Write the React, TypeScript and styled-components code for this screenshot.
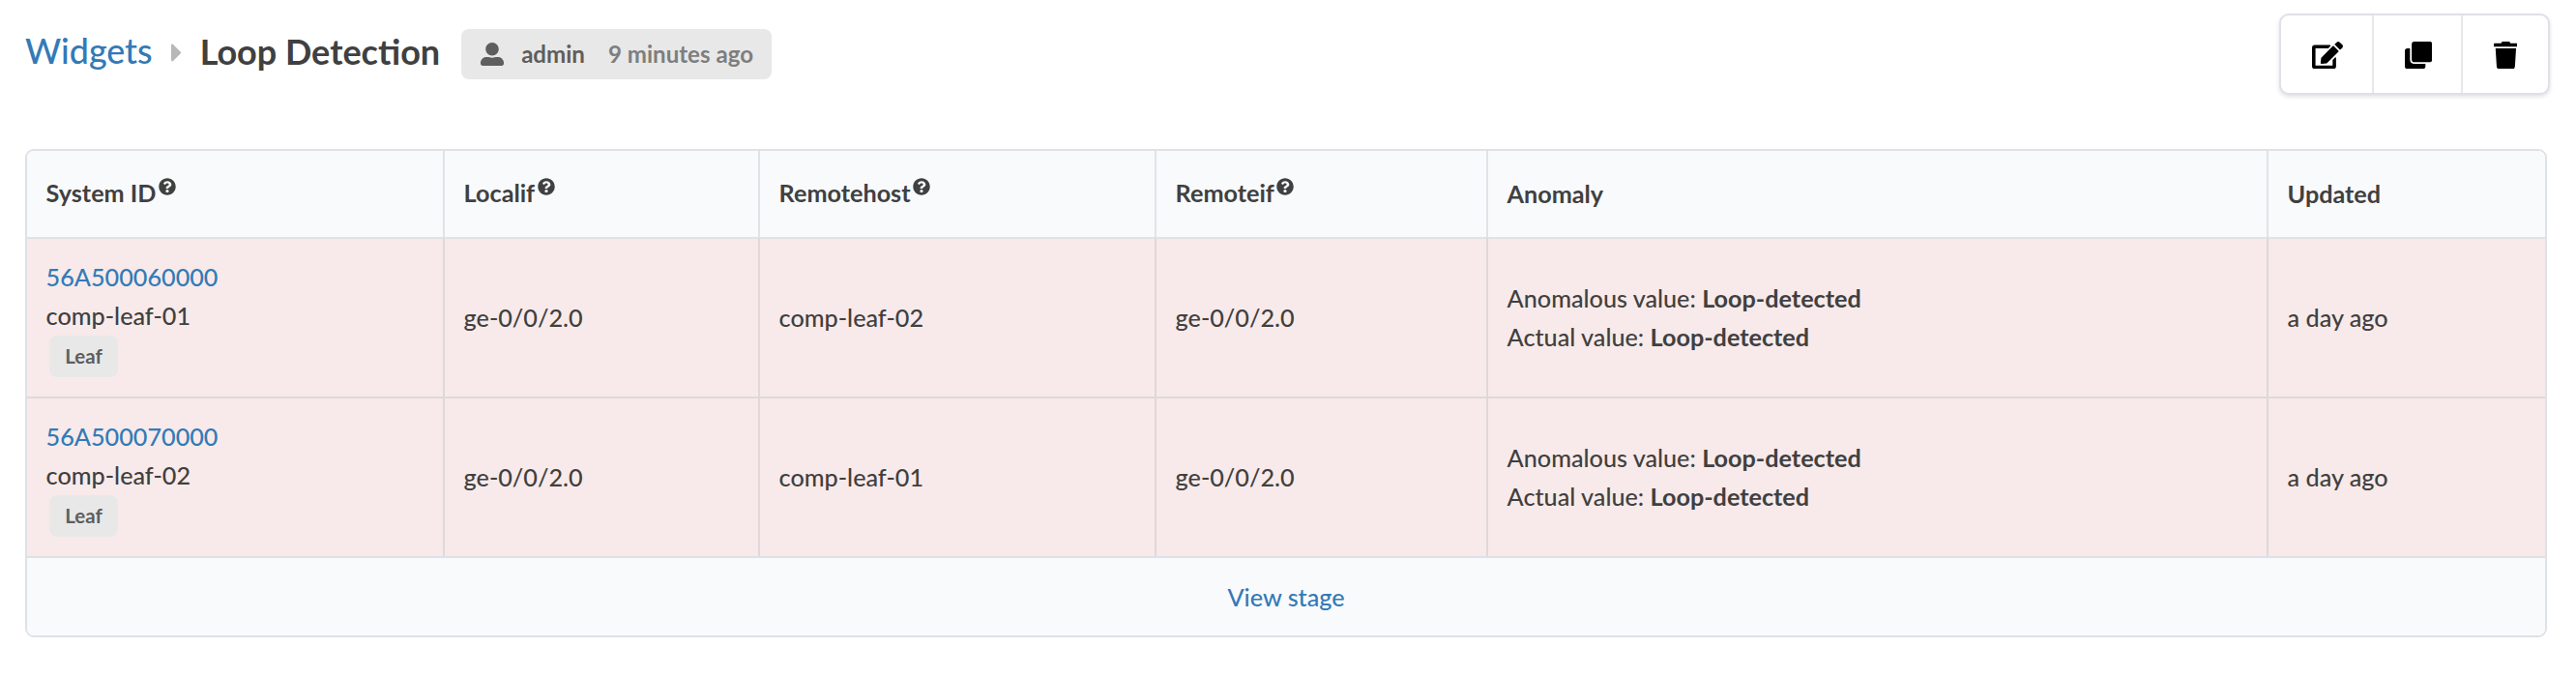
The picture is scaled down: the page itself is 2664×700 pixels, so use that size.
import React from 'react';
import styled, { createGlobalStyle } from 'styled-components';
import { FaCaretRight, FaClone, FaEdit, FaQuestionCircle, FaTrash, FaUserAlt } from 'react-icons/fa';

const GlobalStyle = createGlobalStyle`
  *, *::before, *::after { box-sizing: border-box; }
  body {
    margin: 0;
    background: #fff;
    color: #404040;
    font-family: Lato, sans-serif;
    font-size: 25.2px;
    font-weight: 500;
    line-height: 40px;
  }
`;

const Page = styled.main`
  padding: 14px 27px 0 26px;
`;

const Header = styled.header`
  display: flex;
  align-items: flex-start;
  height: 140px;
`;

const Breadcrumb = styled.nav`
  display: flex;
  align-items: center;
  height: 77px;
  font-size: 35.8px;
`;

const Link = styled.a`
  color: #337ab7;
  text-decoration: none;
`;

const Divider = styled(FaCaretRight)`
  width: 10px;
  height: 19px;
  margin: 3px 20px 0 19px;
  color: #b8b8b8;
`;

const Title = styled.h1`
  margin: 0;
  font-size: 36px;
  font-weight: 700;
`;

const AuthorLabel = styled.div`
  display: flex;
  align-items: center;
  height: 52px;
  margin: 16px 0 0 22px;
  padding: 0 19px 0 20px;
  border-radius: 8px;
  background: #e8e8e8;
  color: #5e5e5e;
  font-size: 24.1px;
  font-weight: 700;

  svg {
    width: 24px;
    height: 24px;
    margin-right: 18px;
  }
`;

const Elapsed = styled.span`
  margin-left: 24px;
  color: #7e7e7e;
`;

const ButtonGroup = styled.div`
  display: flex;
  height: 84px;
  margin-left: auto;
  border: 2px solid #dfe1e8;
  border-radius: 10px;
  background: #fff;
  box-shadow: 0 2px 4px rgba(34, 36, 60, 0.14);
`;

const IconButton = styled.button<{ $width: number; $icon: number }>`
  display: flex;
  align-items: center;
  justify-content: center;
  width: ${({ $width }) => $width}px;
  padding: 6px 0 4px 2px;
  border: 0;
  background: none;
  color: #000;

  & + & {
    border-left: 2px solid #e8e8e8;
  }

  &:last-child {
    padding-left: 0;
  }

  svg {
    flex: none;
    width: ${({ $icon }) => $icon}px;
    height: 28.4px;
  }
`;

const TableFrame = styled.section`
  width: 2608px;
  overflow: hidden;
  border: 2px solid #dee1e6;
  border-radius: 9px;
`;

const Table = styled.table`
  width: 100%;
  table-layout: fixed;
  border-collapse: separate;
  border-spacing: 0;
`;

const HeadCell = styled.th<{ $width: number; $hint: boolean }>`
  width: ${({ $width }) => $width}px;
  height: 89px;
  padding: 0 19.6px ${({ $hint }) => ($hint ? 3 : 1)}px;
  background: #f9fafc;
  font-weight: 700;
  text-align: left;

  & + & {
    border-left: 2px solid #e1e3e6;
  }
`;

const Hint = styled(FaQuestionCircle)`
  width: 18px;
  height: 18px;
  margin-left: 2.6px;
  vertical-align: 7px;
`;

const BodyRow = styled.tr`
  background: #f8eaea;
`;

const Cell = styled.td`
  height: 165px;
  padding: 0 19.6px 2px;
  border-top: 2px solid #e0d8d8;

  ${BodyRow}:first-child > & {
    border-top-color: #e1e3e6;
  }

  & + & {
    border-left: 2px solid #e0d8d8;
  }
`;

const Line = styled.div`
  height: 40px;
`;

const RoleLabel = styled.span`
  display: block;
  width: 71px;
  height: 43px;
  margin: 1px 0 0 3.4px;
  border-radius: 8px;
  background: #e8e8e8;
  color: #5e5e5e;
  font-size: 20.5px;
  font-weight: 700;
  line-height: 43px;
  text-align: center;
`;

const Footer = styled.footer`
  display: flex;
  align-items: center;
  justify-content: center;
  height: 82px;
  padding-bottom: 1px;
  border-top: 2px solid #dee1e6;
  background: #f9fafc;
`;

const columns = [
  { name: 'System ID', width: 430, hint: true },
  { name: 'Localif', width: 326, hint: true },
  { name: 'Remotehost', width: 410, hint: true },
  { name: 'Remoteif', width: 343, hint: true },
  { name: 'Anomaly', width: 807, hint: false },
  { name: 'Updated', width: 288, hint: false },
];

const rows = [
  { id: '56A500060000', host: 'comp-leaf-01', remote: 'comp-leaf-02' },
  { id: '56A500070000', host: 'comp-leaf-02', remote: 'comp-leaf-01' },
];

export default function App() {
  return (
    <Page>
      <GlobalStyle />
      <Header>
        <Breadcrumb>
          <Link>Widgets</Link>
          <Divider viewBox="0 98 166 316" />
          <Title>Loop Detection</Title>
        </Breadcrumb>
        <AuthorLabel>
          <FaUserAlt />
          admin
          <Elapsed>9 minutes ago</Elapsed>
        </AuthorLabel>
        <ButtonGroup>
          <IconButton $width={94} $icon={32} aria-label="Edit"><FaEdit /></IconButton>
          <IconButton $width={92} $icon={28.4} aria-label="Clone"><FaClone /></IconButton>
          <IconButton $width={90} $icon={24.8} aria-label="Delete"><FaTrash /></IconButton>
        </ButtonGroup>
      </Header>
      <TableFrame>
        <Table>
          <thead>
            <tr>
              {columns.map(({ name, width, hint }) => (
                <HeadCell key={name} $width={width} $hint={hint}>{name}{hint && <Hint />}</HeadCell>
              ))}
            </tr>
          </thead>
          <tbody>
            {rows.map(({ id, host, remote }) => (
              <BodyRow key={id}>
                <Cell>
                  <Line><Link>{id}</Link></Line>
                  <Line>{host}</Line>
                  <RoleLabel>Leaf</RoleLabel>
                </Cell>
                <Cell>ge-0/0/2.0</Cell>
                <Cell>{remote}</Cell>
                <Cell>ge-0/0/2.0</Cell>
                <Cell>
                  <Line>Anomalous value: <b>Loop-detected</b></Line>
                  <Line>Actual value: <b>Loop-detected</b></Line>
                </Cell>
                <Cell>a day ago</Cell>
              </BodyRow>
            ))}
          </tbody>
        </Table>
        <Footer><Link>View stage</Link></Footer>
      </TableFrame>
    </Page>
  );
}
